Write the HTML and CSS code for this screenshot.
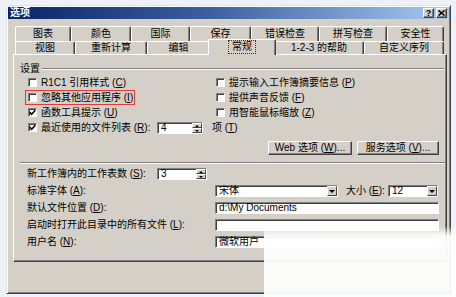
FILE: index.html
```html
<!DOCTYPE html>
<html>
<head>
<meta charset="utf-8">
<title>选项</title>
<link rel="stylesheet" href="styles.css">
</head>
<body>
<div class="screen">
  <div class="dialog">
    <div class="titlebar">
      <span class="title">选项</span>
      <div class="tbtns">
        <span class="tbtn q">?</span>
        <span class="tbtn"><svg width="7" height="6" viewBox="0 0 7 6"><path d="M0.5 0.5 L6.5 5.5 M6.5 0.5 L0.5 5.5" stroke="#000" stroke-width="1.6" fill="none"/></svg></span>
      </div>
    </div>

    <div class="tabs">
      <div class="tabrow r1">
        <div class="tab">图表</div>
        <div class="tab">颜色</div>
        <div class="tab">国际</div>
        <div class="tab">保存</div>
        <div class="tab">错误检查</div>
        <div class="tab">拼写检查</div>
        <div class="tab">安全性</div>
      </div>
      <div class="tabrow r2">
        <div class="tab">视图</div>
        <div class="tab">重新计算</div>
        <div class="tab">编辑</div>
        <div class="tab sel"><span class="focus">常规</span></div>
        <div class="tab">1-2-3 的帮助</div>
        <div class="tab">自定义序列</div>
      </div>
    </div>

    <div class="panel">
      <div class="gh"><span class="legend">设置</span><span class="etch"></span></div>

      <div class="checks">
        <div class="cb"><span class="box"></span><span>R1C1 引用样式 (<u>C</u>)</span></div>
        <div class="cb"><span class="box"></span><span>提示输入工作簿摘要信息 (<u>P</u>)</span></div>
        <div class="cb mark"><span class="box"></span><span>忽略其他应用程序 (<u>I</u>)</span></div>
        <div class="cb"><span class="box"></span><span>提供声音反馈 (<u>F</u>)</span></div>
        <div class="cb"><span class="box on"><svg width="7" height="7" viewBox="0 0 7 7"><path d="M0.8 3.2 L2.6 5.2 L6.3 1.2" stroke="#000" stroke-width="1.6" fill="none"/></svg></span><span>函数工具提示 (<u>U</u>)</span></div>
        <div class="cb"><span class="box"></span><span>用智能鼠标缩放 (<u>Z</u>)</span></div>
        <div class="recent">
          <div class="cb wide"><span class="box on"><svg width="7" height="7" viewBox="0 0 7 7"><path d="M0.8 3.2 L2.6 5.2 L6.3 1.2" stroke="#000" stroke-width="1.6" fill="none"/></svg></span><span>最近使用的文件列表 (<u>R</u>):</span></div>
          <div class="field spin s4"><span class="val">4</span><span class="spinbtns"><span class="sb up"></span><span class="sb dn"></span></span></div>
          <span class="unit">项 (<u>T</u>)</span>
        </div>
      </div>

      <div class="btnrow">
        <div class="btn b1">Web 选项 (<u>W</u>)...</div>
        <div class="btn b2">服务选项 (<u>V</u>)...</div>
      </div>

      <div class="sep"></div>

      <div class="rows">
        <div class="row">
          <span class="lbl short">新工作簿内的工作表数 (<u>S</u>):</span>
          <div class="field spin s3"><span class="val">3</span><span class="spinbtns"><span class="sb up"></span><span class="sb dn"></span></span></div>
        </div>
        <div class="row">
          <span class="lbl">标准字体 (<u>A</u>):</span>
          <div class="field combo font"><span class="val">宋体</span><span class="dd"></span></div>
          <span class="sizelbl">大小 (<u>E</u>):</span>
          <div class="field combo size"><span class="val">12</span><span class="dd"></span></div>
        </div>
        <div class="row">
          <span class="lbl">默认文件位置 (<u>D</u>):</span>
          <div class="field text"><span class="val">d:\My Documents</span></div>
        </div>
        <div class="row">
          <span class="lbl">启动时打开此目录中的所有文件 (<u>L</u>):</span>
          <div class="field text"><span class="val"></span></div>
        </div>
        <div class="row">
          <span class="lbl">用户名 (<u>N</u>):</span>
          <div class="field text"><span class="val">微软用户</span></div>
        </div>
      </div>
    </div>
  </div>
</div>
<div class="fade"></div>
</body>
</html>
```
FILE: styles.css
```css
* { box-sizing: border-box; margin: 0; padding: 0; }
html, body { width: 456px; height: 297px; overflow: hidden; }
body {
  position: relative;
  background: #eef2f8;
  font-family: "Liberation Sans", "Noto Sans CJK SC", sans-serif;
  font-size: 10px;
  line-height: 12px;
  color: #000;
}
u { text-decoration: underline; text-underline-offset: 1px; }

.screen { padding: 5px 0 0 6px; }

.dialog {
  width: 445px;
  height: 289px;
  background: #d4d0c8;
  border: 1px solid;
  border-color: #e6e3dd #404040 #404040 #e6e3dd;
  box-shadow: inset 1px 1px #fff, inset -1px -1px #808080;
  padding: 1px;
  display: flex;
  flex-direction: column;
}

.titlebar {
  height: 12px;
  background: linear-gradient(90deg, #0a246a 0%, #3a5e9e 45%, #a6caf0 100%);
  display: flex;
  align-items: center;
  justify-content: space-between;
  padding: 0 2px 0 2px;
}
.title { color: #fff; font-weight: bold; font-size: 10px; line-height: 12px; }
.tbtns { display: flex; gap: 2px; }
.tbtn {
  width: 11px; height: 10px;
  background: #d4d0c8;
  border: 1px solid; border-color: #fff #404040 #404040 #fff;
  box-shadow: inset -1px -1px #808080;
  display: flex; align-items: center; justify-content: center;
  font-size: 9px; font-weight: bold; line-height: 8px;
  font-family: "Liberation Sans", sans-serif;
}

.tabs { margin-top: 7px; padding-left: 7px; }
.tabrow { display: flex; }
.tabrow.r1 { height: 15px; }
.tabrow.r2 { height: 13px; }
.tab {
  background: #d4d0c8;
  border-top: 1px solid #fff;
  border-left: 1px solid #fff;
  border-right: 1px solid #404040;
  box-shadow: inset -1px 0 #808080;
  border-radius: 2px 2px 0 0;
  display: flex; align-items: center; justify-content: center;
  white-space: nowrap;
}
.r1 .tab:nth-child(1) { width: 56px; }
.r1 .tab:nth-child(2) { width: 60px; }
.r1 .tab:nth-child(3) { width: 59px; }
.r1 .tab:nth-child(4) { width: 61px; }
.r1 .tab:nth-child(5) { width: 68px; }
.r1 .tab:nth-child(6) { width: 68px; }
.r1 .tab:nth-child(7) { width: 57px; }
.r2 .tab:nth-child(1) { width: 60px; }
.r2 .tab:nth-child(2) { width: 72px; }
.r2 .tab:nth-child(3) { width: 63px; }
.r2 .tab:nth-child(4) { width: 64px; }
.r2 .tab:nth-child(5) { width: 90px; }
.r2 .tab:nth-child(6) { width: 80px; }
.r2 .tab.sel {
  position: relative; z-index: 2;
  width: 68px;
  margin: -2px -2px -1px -2px;
  height: 16px;
  padding-bottom: 1px;
}
.focus { outline: 1px dotted #333; outline-offset: 1px; padding: 0 2px; line-height: 10px; }

.panel {
  margin: 0 2px 0 5px;
  height: 208px;
  border: 1px solid;
  border-color: #fff #404040 #404040 #fff;
  box-shadow: inset -1px -1px #808080;
  position: relative; z-index: 1;
}

.gh { display: flex; align-items: center; height: 11px; margin-top: 8px; padding-left: 6px; padding-right: 2px; }
.legend { line-height: 11px; }
.etch { flex: 1; margin-left: 2px; border-top: 1px solid #808080; border-bottom: 1px solid #fff; }

.checks {
  display: grid;
  grid-template-columns: 188px auto;
  grid-auto-rows: 15px;
  padding-left: 14px;
  margin-top: 1px;
}
.cb { display: flex; align-items: center; gap: 4px; white-space: nowrap; }
.cb.mark {
  justify-self: start;
  width: 110px;
  margin-left: -3px;
  padding-left: 2px;
  border: 1px solid #e43a3a;
}
.box {
  width: 9px; height: 9px;
  background: #fff;
  border: 1px solid; border-color: #808080 #fff #fff #808080;
  box-shadow: inset 1px 1px #404040;
  display: flex; align-items: center; justify-content: center;
  flex: none;
}
.recent { grid-column: 1 / -1; display: flex; align-items: center; }
.cb.wide { width: 129px; }
.unit { margin-left: 9px; }

.field {
  height: 12px;
  background: #fff;
  border: 1px solid; border-color: #808080 #fff #fff #808080;
  box-shadow: inset 1px 1px #404040;
  display: flex; align-items: center;
  position: relative;
}
.val { padding-left: 3px; line-height: 10px; flex: 1; white-space: nowrap; }
.spin.s4 { width: 46px; }
.spin.s3 { width: 50px; }
.spinbtns { display: flex; flex-direction: column; width: 10px; height: 10px; margin-right: 0; }
.sb {
  flex: 1; background: #d4d0c8;
  border: 1px solid; border-color: #fff #404040 #404040 #fff;
  position: relative;
}
.sb::after {
  content: ""; position: absolute; left: 2px; top: 0;
  border-left: 2px solid transparent; border-right: 2px solid transparent;
}
.sb.up::after { border-bottom: 2px solid #000; top: 1px; }
.sb.dn::after { border-top: 2px solid #000; top: 1px; }

.combo .dd {
  width: 10px; height: 10px; background: #d4d0c8;
  border: 1px solid; border-color: #fff #404040 #404040 #fff;
  position: relative; flex: none;
}
.combo .dd::after {
  content: ""; position: absolute; left: 1px; top: 3px;
  border-left: 3px solid transparent; border-right: 3px solid transparent;
  border-top: 3px solid #000;
}
.combo.font { width: 123px; }
.combo.size { width: 50px; }
.sizelbl { margin-left: 8px; width: 42px; white-space: nowrap; }
.text { width: 224px; }

.btnrow { display: flex; justify-content: flex-end; gap: 5px; padding-right: 7px; margin-top: 6px; }
.btn {
  height: 14px;
  background: #d4d0c8;
  border: 1px solid; border-color: #fff #404040 #404040 #fff;
  box-shadow: inset -1px -1px #808080;
  display: flex; align-items: center; justify-content: center;
  white-space: nowrap;
}
.b1 { width: 84px; }
.b2 { width: 82px; }

.sep { margin: 7px 1px 0 6px; border-top: 1px solid #808080; border-bottom: 1px solid #fff; }

.rows { display: flex; flex-direction: column; gap: 5px; margin-top: 4px; padding-left: 13px; }
.row { display: flex; align-items: center; height: 12px; }
.lbl { width: 188px; white-space: nowrap; }
.lbl.short { width: 130px; }

.fade {
  position: absolute;
  left: 264px; top: 226px; right: 0; bottom: 0;
  background: linear-gradient(to bottom, rgba(255,255,255,0) 0px, rgba(255,255,255,0.95) 10px, rgba(255,255,255,0.93) 100%);
  z-index: 5;
}
```
